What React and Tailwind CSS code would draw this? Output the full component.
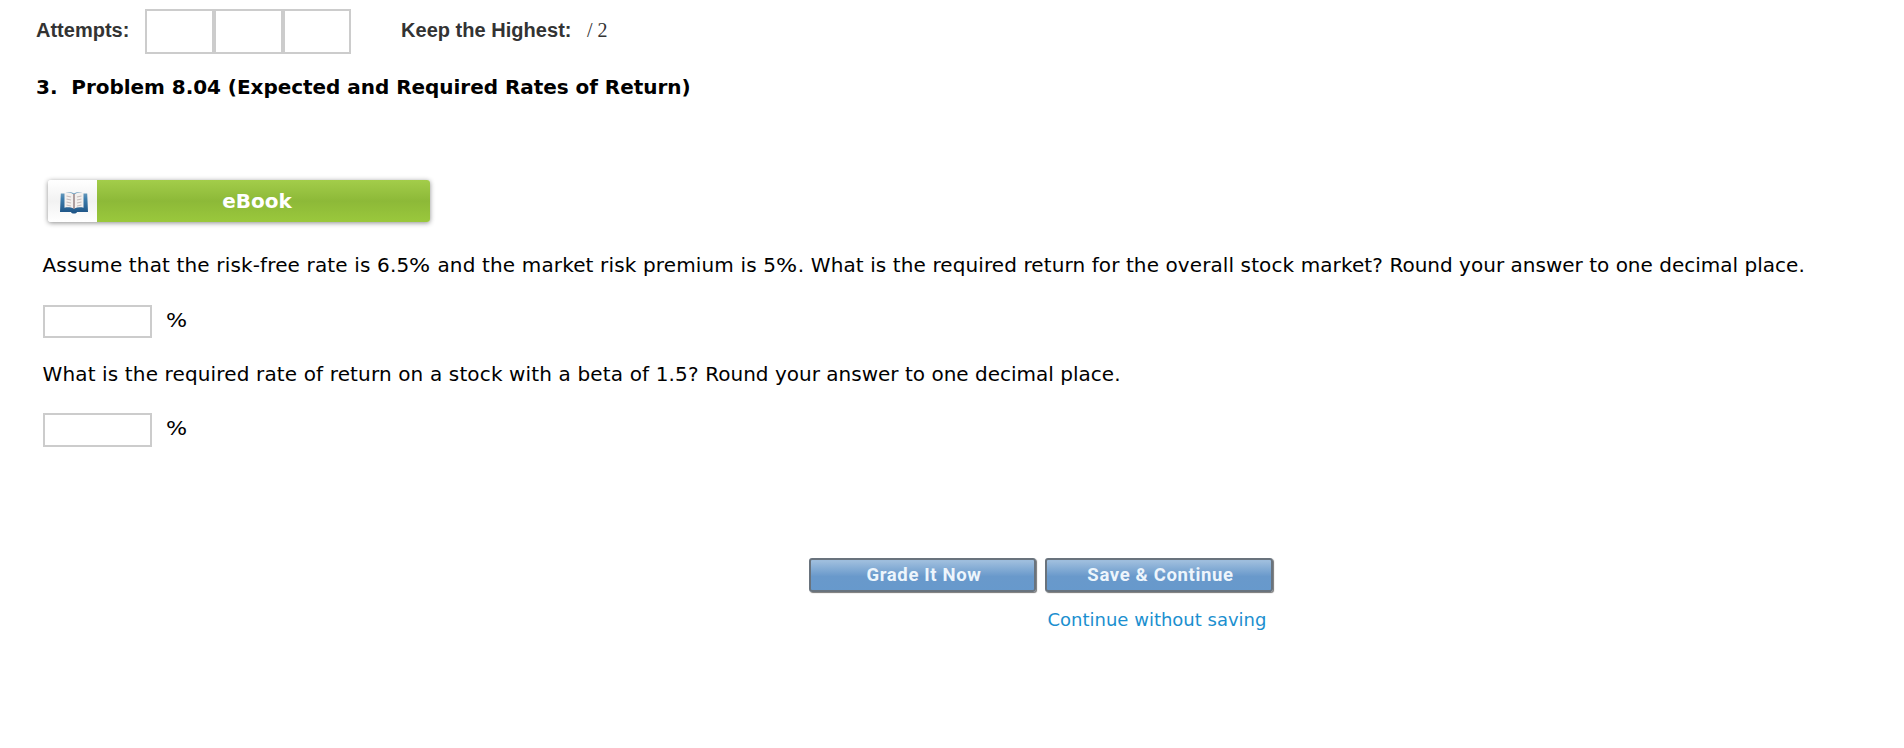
import React, { useState } from "react";

const verdana = "font-['Verdana','DejaVu_Sans',sans-serif]";

function BookIcon() {
  return (
    <svg width="30" height="26" viewBox="0 0 30 26">
      <defs>
        <linearGradient id="cover" x1="0" y1="0" x2="0" y2="1">
          <stop offset="0" stopColor="#6f9fbf" />
          <stop offset="0.3" stopColor="#3f7fae" />
          <stop offset="1" stopColor="#1c5284" />
        </linearGradient>
      </defs>
      <path
        d="M1.800 3.500h4c3-2 7-1.600 9.200 0c2.200-1.600 6.200-2 9.200 0h4l.8 18.500H18c-.5 2-5.500 2-6 0H1z"
        fill="url(#cover)"
      />
      <path d="M5.500 3c3-1.200 7.200-.6 9.200 1.500v14c-2.700-1.300-6.200-1.500-9.200-.8z" fill="#f3f0ee" />
      <path d="M24.500 3c-3-1.200-7.200-.6-9.200 1.500v14c2.700-1.300 6.200-1.500 9.200-.8z" fill="#f3f0ee" />
      <path d="M15 4v15" stroke="#a98f8c" strokeWidth="1.500" />
      <path
        d="M7.500 6l4.500 1M7.500 9l4.500 1M7.500 12l4.500 1M7.500 15l4.500 1M22.500 6l-4.500 1M22.500 9l-4.500 1M22.500 12l-4.500 1M22.500 15l-4.500 1"
        stroke="#c6bcbb"
        strokeWidth="1.200"
        fill="none"
      />
    </svg>
  );
}

// DejaVu's percent sign is narrower than Verdana's
function Percent() {
  return <span className="mr-[2.5px] inline-block origin-left scale-x-[1.11]">%</span>;
}

function Answer({ value, onChange, className }) {
  return (
    <div className={"flex items-start " + className}>
      <input
        value={value}
        onChange={(e) => onChange(e.target.value)}
        className="w-[109px] h-full border-2 border-[#cccccc] bg-white px-2 text-xl outline-none"
      />
      <span className="ml-[14px] mt-[3px] text-[20px] leading-6">
        <Percent />
      </span>
    </div>
  );
}

function BlueButton({ children, className }) {
  return (
    <button
      className={
        "h-[34px] rounded-[3px] border-2 border-[#69737d] bg-linear-to-b from-[#9dbddd] from-5% via-[#6999cb] via-55% to-[#6799cc] shadow-[1px_1px_1px_#777777] font-['Roboto',sans-serif] font-bold text-[18.5px] leading-[28px] text-[#edf5fc] " +
        className
      }
    >
      {children}
    </button>
  );
}

export default function App() {
  const [market, setMarket] = useState("");
  const [stock, setStock] = useState("");

  return (
    <div className={"h-[748px] overflow-hidden bg-white text-black " + verdana}>
      {/* attempts bar */}
      <div className="flex items-start pl-9 pt-[9px] text-[20px] leading-6 text-[#333333]">
        <span className="mt-[9px] w-[109px] font-['Liberation_Sans',Arial,sans-serif] font-bold">
          Attempts:
        </span>
        <div className="flex h-[45px]">
          <div className="w-[69px] border-2 border-[#cccccc]" />
          <div className="w-[69px] border-2 border-[#cccccc]" />
          <div className="w-[68px] border-2 border-[#cccccc]" />
        </div>
        <span className="ml-[50px] mt-[9px] w-[186px] whitespace-nowrap font-['Liberation_Sans',Arial,sans-serif] font-bold tracking-[0.03px]">
          Keep the Highest:
        </span>
        <span className="mt-[9px] font-['Liberation_Serif','Times_New_Roman',serif]">/ 2</span>
      </div>

      <h1 className="ml-9 mt-[21px] whitespace-pre text-[20px] font-bold leading-6 tracking-[-0.04px]">
        3.  Problem 8.04 (Expected and Required Rates of Return)
      </h1>

      {/* ebook link */}
      <a className="ml-12 mt-[81px] flex h-[42px] w-[382px] rounded-[3px] shadow-[0_1px_5px_rgba(0,0,0,0.45)]">
        <span className="flex w-[49px] items-center justify-center rounded-l-[3px] bg-linear-to-b from-white via-[#f2f2f2] to-white pl-[3px] pt-[3px]">
          <BookIcon />
        </span>
        <span className="flex-1 rounded-r-[3px] bg-linear-to-b from-[#a3cd4a] via-[#8db938] to-[#9ac83c] pr-[13px] pt-[9px] text-center text-[20px] font-bold leading-6 text-white">
          eBook
        </span>
      </a>

      <div className="ml-[42.5px] mt-[31px]">
        <p className="whitespace-nowrap text-[20px] leading-6 tracking-[0.1px]">
          <span className="tracking-[0.145px]">
            Assume that the risk-free rate is 6.5<Percent /> and the market risk premium is 5<Percent />.
          </span>{" "}
          What is the required return for the overall stock market?{" "}
          <span className="tracking-[0.01px]">Round your answer to one decimal place.</span>
        </p>
        <Answer value={market} onChange={setMarket} className="mt-[28px] h-[33px]" />
        <p className="mt-[24px] whitespace-nowrap text-[20px] leading-6 tracking-[0.14px]">
          What is the required rate of return on a stock with a beta of 1.5?{" "}
          <span className="tracking-[0.01px]">Round your answer to one decimal place.</span>
        </p>
        <Answer value={stock} onChange={setStock} className="mt-[27px] h-[34px]" />
      </div>

      {/* actions */}
      <div className="ml-[809px] mt-[111px] w-[464px]">
        <div className="flex justify-between">
          <BlueButton className="w-[227px] pl-[3px] tracking-[0.65px]">Grade It Now</BlueButton>
          <BlueButton className="w-[228px] pl-[3px] tracking-[0.65px]">Save &amp; Continue</BlueButton>
        </div>
        <a className="ml-[238.5px] mt-[16px] block whitespace-nowrap text-[18px] leading-6 text-[#1b8fcf]">
          Continue without saving
        </a>
      </div>
    </div>
  );
}
